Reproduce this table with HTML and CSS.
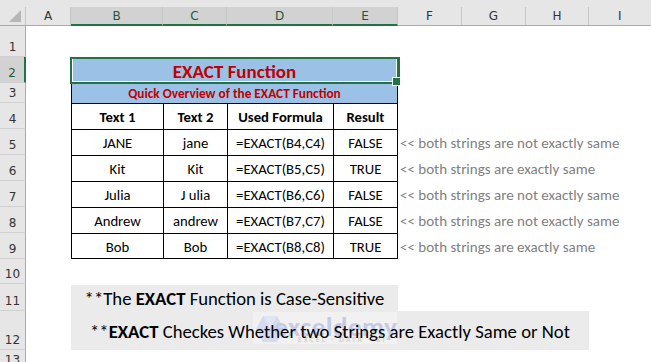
FILE: index.html
```html
<!DOCTYPE html>
<html>
<head>
<meta charset="utf-8">
<link rel="stylesheet" href="styles.css">
</head>
<body>
<div class="sheet">
  <div class="row hdr">
    <div class="corner"><span class="tri"></span></div>
    <div class="ch">A</div>
    <div class="ch sel">B</div>
    <div class="ch sel">C</div>
    <div class="ch sel">D</div>
    <div class="ch sel">E</div>
    <div class="ch">F</div>
    <div class="ch">G</div>
    <div class="ch">H</div>
    <div class="ch">I</div>
  </div>
  <div class="row r1"><div class="rh">1</div></div>
  <div class="row r2"><div class="rh sel">2</div><div class="title">EXACT Function</div></div>
  <div class="row r3"><div class="rh">3</div><div class="sub">Quick Overview of the EXACT Function</div></div>
  <div class="row r4 trow">
    <div class="rh">4</div>
    <div class="c cb th">Text 1</div><div class="c cc th">Text 2</div><div class="c cd th">Used Formula</div><div class="c ce th">Result</div>
  </div>
  <div class="row trow">
    <div class="rh">5</div>
    <div class="c cb">JANE</div><div class="c cc">jane</div><div class="c cd">=EXACT(B4,C4)</div><div class="c ce">FALSE</div>
    <div class="note">&lt;&lt; both strings are not exactly same</div>
  </div>
  <div class="row trow">
    <div class="rh">6</div>
    <div class="c cb">Kit</div><div class="c cc">Kit</div><div class="c cd">=EXACT(B5,C5)</div><div class="c ce">TRUE</div>
    <div class="note">&lt;&lt; both strings are exactly same</div>
  </div>
  <div class="row trow">
    <div class="rh">7</div>
    <div class="c cb">Julia</div><div class="c cc">J ulia</div><div class="c cd">=EXACT(B6,C6)</div><div class="c ce">FALSE</div>
    <div class="note">&lt;&lt; both strings are not exactly same</div>
  </div>
  <div class="row trow">
    <div class="rh">8</div>
    <div class="c cb">Andrew</div><div class="c cc">andrew</div><div class="c cd">=EXACT(B7,C7)</div><div class="c ce">FALSE</div>
    <div class="note">&lt;&lt; both strings are not exactly same</div>
  </div>
  <div class="row trow last">
    <div class="rh">9</div>
    <div class="c cb">Bob</div><div class="c cc">Bob</div><div class="c cd">=EXACT(B8,C8)</div><div class="c ce">TRUE</div>
    <div class="note">&lt;&lt; both strings are exactly same</div>
  </div>
  <div class="row r10"><div class="rh">10</div></div>
  <div class="row r11"><div class="rh">11</div><div class="box box11"><span class="btxt">**The <b>EXACT</b> Function is Case-Sensitive</span></div></div>
  <div class="row r12"><div class="rh">12</div>
    <div class="box box12">
      <div class="wm" aria-hidden="true">
        <svg class="wm-hex" width="30" height="28" viewBox="0 0 30 28"><polygon points="8,1 22,1 29,14 22,27 8,27 1,14" fill="#d4dbee"/><polygon points="8,1 22,1 15,14" fill="#e0e5f3"/></svg>
        <span class="wm-t">exceldemy</span>
        <span class="wm-s">EXCEL · DATA · BI</span>
      </div>
      <span class="btxt">**<b>EXACT</b> Checkes Whether two Strings are Exactly Same or Not</span>
    </div>
  </div>
  <div class="row r13"><div class="rh">13</div></div>
</div>
</body>
</html>
```
FILE: styles.css
```css
* { box-sizing: border-box; }
html, body { margin: 0; padding: 0; background: #fff; }
body { width: 651px; height: 362px; overflow: hidden; font-family: Carlito, Calibri, Lato, "Open Sans", sans-serif; color: #000; }
.sheet { display: flex; flex-direction: column; }
.row { display: grid; grid-template-columns: 26px 45px 92px 64px 106px 65px 64px 64px 63px 1fr; }
.hdr { height: 26px; background: #e6e6e6; border-bottom: 1px solid #ababab; }
.r1 { height: 31px; }
.r2 { height: 26px; }
.r3 { height: 20px; }
.trow { height: 26px; }
.r10 { height: 25px; }
.r11 { height: 27px; }
.r12 { height: 39px; }
.r13 { height: 20px; }

.corner { position: relative; border-right: 1px solid #c6c6c6; margin-top: 7px; }
.tri { position: absolute; right: 4px; bottom: 3px; width: 0; height: 0; border-left: 12px solid transparent; border-bottom: 12px solid #b6b6b6; }
.ch { margin-top: 7px; border-right: 1px solid #c6c6c6; font-family: "DejaVu Sans", "Liberation Sans", sans-serif; font-size: 12px; color: #333; display: flex; align-items: center; justify-content: center; }
.ch.sel { background: #d2d2d2; color: #1e5a38; border-bottom: 2px solid #217346; margin-bottom: -1px; }
.ch:last-child { border-right: none; justify-content: flex-start; padding-left: 29px; }

.rh { grid-column: 1; background: #e6e6e6; border-right: 1px solid #ababab; border-bottom: 1px solid #d0d0d0; font-family: "DejaVu Sans", "Liberation Sans", sans-serif; font-size: 12px; color: #333; display: flex; align-items: flex-end; justify-content: center; line-height: 1; padding-bottom: 3px; }
.rh.sel { background: #d2d2d2; color: #1e5a38; border-right: 2px solid #217346; }

.title { grid-column: 3 / 7; position: relative; background: #9bc2e6; color: #c00000; font-weight: bold; font-size: 19px; display: flex; align-items: center; justify-content: center; padding-top: 2px; box-shadow: inset 0 0 0 2px #fff; }
.title::after { content: ""; position: absolute; left: -1px; top: 0; right: -2px; bottom: -1px; border: 2px solid #217346; border-right-width: 3px; }
.title::before { content: ""; position: absolute; right: -3px; bottom: -3px; width: 7px; height: 7px; background: #217346; border: 1px solid #fff; z-index: 2; }

.sub { grid-column: 3 / 7; background: #9bc2e6; color: #c00000; font-weight: bold; font-size: 13.3px; display: flex; align-items: center; justify-content: center; border-left: 1px solid #000; border-right: 1px solid #000; padding-top: 1px; }

.c { border-left: 1px solid #000; border-top: 1px solid #000; font-size: 14.7px; display: flex; align-items: center; justify-content: center; padding-top: 1px; white-space: nowrap; }
.cb { grid-column: 3; }
.cc { grid-column: 4; }
.cd { grid-column: 5; }
.ce { grid-column: 6; border-right: 1px solid #000; }
.th { font-weight: bold; }
.trow.last .c { border-bottom: 1px solid #000; }
.note { grid-column: 7 / -1; color: #7f7f7f; font-size: 15px; display: flex; align-items: center; padding-left: 2px; padding-top: 1px; white-space: nowrap; }

.box { background: #ebebeb; display: flex; align-items: center; justify-content: center; font-size: 18.7px; white-space: nowrap; position: relative; }
.box11 { grid-column: 3 / 7; margin-top: 1px; }
.box12 { grid-column: 3 / 10; padding-top: 1px; }
.btxt { position: relative; z-index: 1; }
.wm { position: absolute; left: 182px; top: 1px; width: 144px; height: 32px; background: #f1f1f1; }
.wm-hex { position: absolute; left: 2px; top: 3px; }
.wm-t { position: absolute; left: 21px; top: 1px; font-size: 27px; line-height: 1; font-weight: bold; color: #c3cbe8; letter-spacing: 0.5px; }
.wm-s { position: absolute; left: 45px; top: 24px; font-size: 7px; line-height: 1; letter-spacing: 2.4px; color: #cfcfcf; font-weight: bold; }
```
